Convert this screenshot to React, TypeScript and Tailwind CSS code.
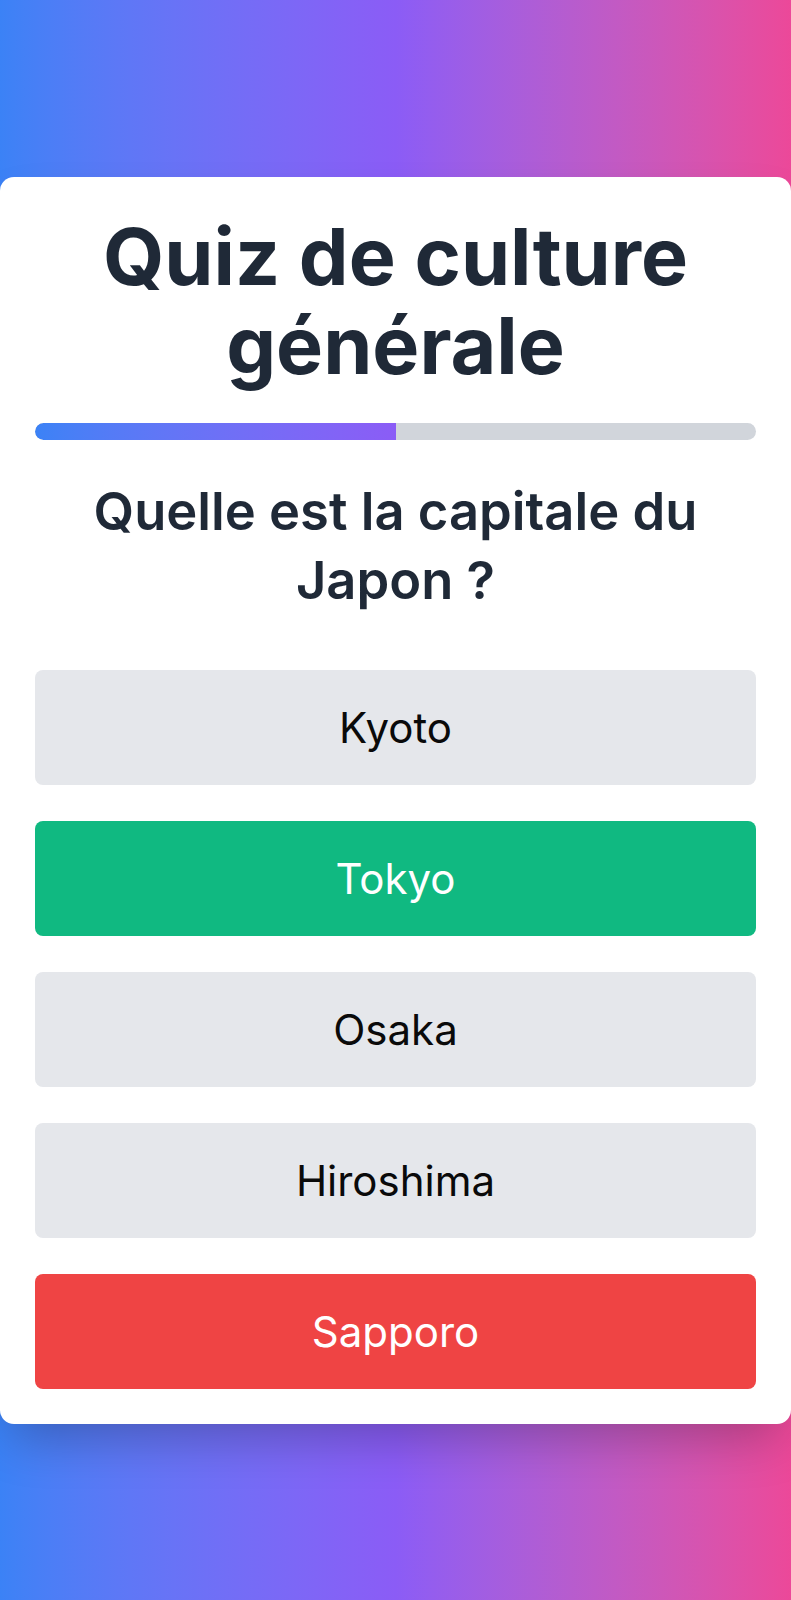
import { useState } from 'react'

const options = ['Kyoto', 'Tokyo', 'Osaka', 'Hiroshima', 'Sapporo']
const correct = 'Tokyo'

export default function App() {
  const [picked] = useState<string | null>('Sapporo')

  const optionClass = (opt: string) => {
    if (picked && opt === correct) return 'bg-[#10b981] text-white'
    if (picked && opt === picked) return 'bg-[#ef4444] text-white'
    return 'bg-[#e5e7eb] text-[#0a0a0a]'
  }

  return (
    <div
      className="min-h-screen flex items-center bg-gradient-to-r from-[#3b82f6] via-[#8b5cf6] to-[#ec4899]"
      style={{ fontFamily: 'Inter, "Noto Sans", sans-serif' }}
    >
      <div className="w-full bg-white rounded-[14px] shadow-2xl p-[35px]">
        <h1 className="text-center font-bold text-[79px] leading-[89px] text-[#1f2937]">
          Quiz de culture générale
        </h1>

        {/* progress */}
        <div className="mt-[33px] h-[17px] w-full rounded-full bg-[#d1d5db] overflow-hidden">
          <div className="h-full w-1/2 rounded-l-full bg-gradient-to-r from-[#3b82f6] to-[#8b5cf6]" />
        </div>

        <h2 className="mt-[37px] text-center font-semibold text-[52.5px] leading-[69px] text-[#1f2937]">
          Quelle est la capitale du Japon ?
        </h2>

        <div className="mt-[55px] flex flex-col gap-[36px]">
          {options.map((opt) => (
            <button
              key={opt}
              className={`h-[115px] w-full rounded-[8px] text-[42px] font-normal ${optionClass(opt)}`}
            >
              {opt}
            </button>
          ))}
        </div>
      </div>
    </div>
  )
}
